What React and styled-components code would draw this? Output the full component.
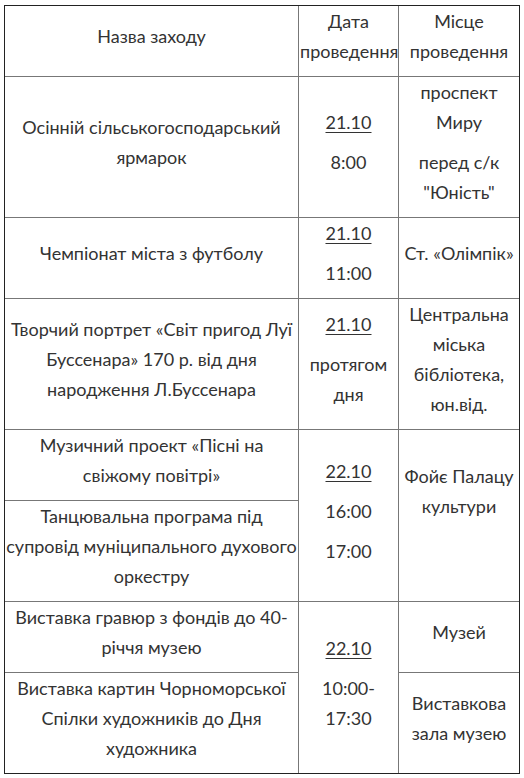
import React from 'react';
import styled, { createGlobalStyle } from 'styled-components';

const GlobalStyle = createGlobalStyle`
  html, body {
    margin: 0;
    background: #fff;
  }
  body {
    font-family: Lato, "Noto Sans", "Liberation Sans", sans-serif;
    color: #333;
  }
`;

const Page = styled.div`
  padding: 5px 4px;
`;

const Table = styled.table`
  width: 516px;
  table-layout: fixed;
  border-collapse: separate;
  border-spacing: 0;
  border: 1px solid #222;
`;

const Col = styled.col`
  width: ${props => props.$w}px;
`;

const Row = styled.tr`
  &:first-child > td {
    border-top: none;
  }
`;

const Cell = styled.td`
  padding: 0 1px;
  text-align: center;
  vertical-align: middle;
  font-size: 18px;
  border-top: 1px solid #777;
  border-left: 1px solid #777;
  height: ${props => (props.$h ? `${props.$h}px` : 'auto')};

  &:first-child {
    border-left: none;
  }
`;

const Para = styled.p`
  margin: 0 0 10px;
  line-height: 30px;
`;

const DateMark = styled.span`
  text-decoration: underline;
  text-underline-offset: 3px;
`;

const App = () => {
  return (
    <Page>
      <GlobalStyle />
      <Table>
        <colgroup>
          <Col $w={293} />
          <Col $w={100} />
          <Col $w={121} />
        </colgroup>
        <tbody>
          <Row>
            <Cell $h={70}><Para>Назва заходу</Para></Cell>
            <Cell><Para>Дата проведення</Para></Cell>
            <Cell><Para>Місце проведення</Para></Cell>
          </Row>
          <Row>
            <Cell><Para>Осінній сільськогосподарський ярмарок</Para></Cell>
            <Cell>
              <Para><DateMark>21.10</DateMark></Para>
              <Para>8:00</Para>
            </Cell>
            <Cell>
              <Para>проспект Миру</Para>
              <Para>перед с/к "Юність"</Para>
            </Cell>
          </Row>
          <Row>
            <Cell><Para>Чемпіонат міста з футболу</Para></Cell>
            <Cell>
              <Para><DateMark>21.10</DateMark></Para>
              <Para>11:00</Para>
            </Cell>
            <Cell><Para>Ст. «Олімпік»</Para></Cell>
          </Row>
          <Row>
            <Cell>
              <Para>Творчий портрет «Світ пригод Луї Буссенара» 170 р. від дня народження Л.Буссенара</Para>
            </Cell>
            <Cell>
              <Para><DateMark>21.10</DateMark></Para>
              <Para>протягом дня</Para>
            </Cell>
            <Cell><Para>Центральна міська бібліотека, юн.від.</Para></Cell>
          </Row>
          <Row>
            <Cell><Para>Музичний проект «Пісні на свіжому повітрі»</Para></Cell>
            <Cell rowSpan={2}>
              <Para><DateMark>22.10</DateMark></Para>
              <Para>16:00</Para>
              <Para>17:00</Para>
            </Cell>
            <Cell rowSpan={2}>
              <Para>Фойє Палацу культури</Para>
              <Para>&nbsp;</Para>
            </Cell>
          </Row>
          <Row>
            <Cell><Para>Танцювальна програма під супровід муніципального духового оркестру</Para></Cell>
          </Row>
          <Row>
            <Cell><Para>Виставка гравюр з фондів до 40-річчя музею</Para></Cell>
            <Cell rowSpan={2}>
              <Para><DateMark>22.10</DateMark></Para>
              <Para>10:00-<br />17:30</Para>
            </Cell>
            <Cell><Para>Музей</Para></Cell>
          </Row>
          <Row>
            <Cell><Para>Виставка картин Чорноморської Спілки художників до Дня художника</Para></Cell>
            <Cell><Para>Виставкова зала музею</Para></Cell>
          </Row>
        </tbody>
      </Table>
    </Page>
  );
};

export default App;
